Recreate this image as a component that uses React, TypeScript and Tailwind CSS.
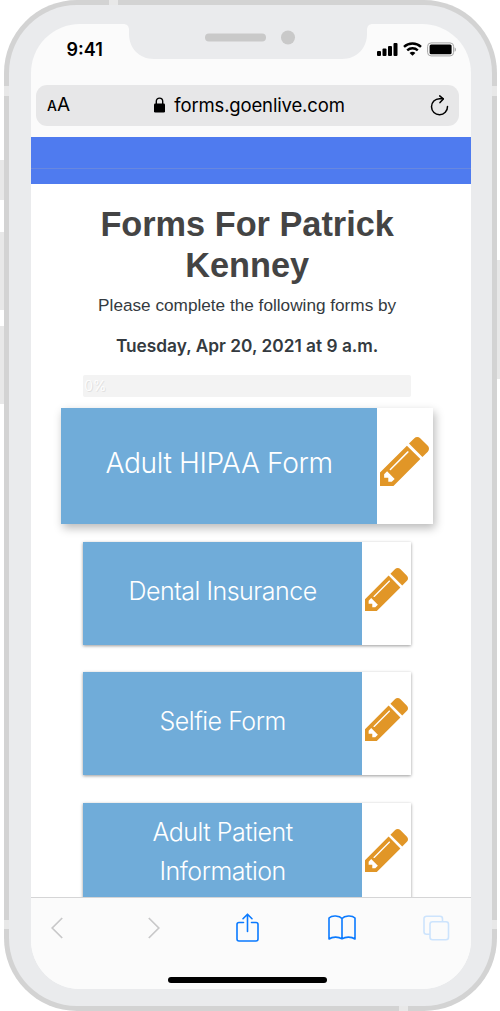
import clsx from "clsx";

const forms = [
  { title: "Adult HIPAA Form", active: true },
  { title: "Dental Insurance", active: false },
  { title: "Selfie Form", active: false },
  { title: "Adult Patient Information", active: false },
];

const PencilIcon = ({ className }: { className?: string }) => (
  <svg viewBox="0 149 1515 1515" fill="currentColor" className={className}>
    <path d="M363 1536l91-91-235-235-91 91v107h128v128h107zM886 608q0-22-22-22-10 0-17 7l-542 542q-7 7-7 17 0 22 22 22 10 0 17-7l542-542q7-7 7-17zM832 416l416 416-832 832h-416v-416zM1515 512q0 53-37 90l-166 166-416-416 166-165q36-38 90-38 53 0 91 38l235 234q37 39 37 91z" />
  </svg>
);

const FormCard = ({ title, active }: { title: string; active: boolean }) => (
  <div
    className={clsx(
      "flex shrink-0 bg-white",
      active
        ? "-mx-[22px] mb-[18px] h-[116.5px] shadow-[2px_4px_9px_rgba(0,0,0,0.28)]"
        : "mb-[27.4px] h-[103px] shadow-[0_1px_3px_rgba(0,0,0,0.4)]"
    )}
  >
    <div
      className={clsx(
        "flex flex-1 items-center justify-center bg-[#70acd9] pb-[5px] text-center font-[350] text-white",
        active
          ? "text-[28.2px] tracking-[-0.38px]"
          : "px-8 text-[25px] leading-[39px] tracking-[-0.5px]"
      )}
    >
      {title}
    </div>
    <div
      className={clsx(
        "flex items-center pb-2 pl-[3px] text-[#e19627]",
        active ? "w-14" : "w-[49px]"
      )}
    >
      <PencilIcon className={active ? "size-[49px]" : "size-[43px]"} />
    </div>
  </div>
);

const Notch = () => (
  <div className="absolute left-[92px] top-0 h-[36px] w-[250px]">
    <svg viewBox="0 0 250 36" className="h-full w-full">
      <path
        d="M0 -1v1c4 0 6 2 6 6v4c0 14 10 25 25 25h188c15 0 25-11 25-25v-4c0-4 2-6 6-6v-1z"
        fill="#eaebed"
      />
      <rect x="82" y="9.5" width="61" height="8" rx="4" fill="#c9c9c9" />
      <circle cx="165" cy="13.5" r="7" fill="#c9c9c9" />
    </svg>
  </div>
);

const StatusBar = () => (
  <div className="flex h-[61px] items-start justify-between pl-[35.5px] pr-[13.5px]">
    <span className="mt-[14.5px] text-[18px] font-semibold leading-6 text-black">
      9:41
    </span>
    <div className="mt-[18.5px] flex items-start">
      <svg width="21" height="15" viewBox="0 0 21 15">
        <rect x="0" y="9" width="4" height="5" rx="1" />
        <rect x="5.5" y="6.5" width="4" height="7.5" rx="1" />
        <rect x="11" y="4" width="4" height="10" rx="1" />
        <rect x="16.5" y="1" width="4" height="13" rx="1" />
      </svg>
      <svg
        width="19"
        height="15"
        viewBox="0 0 19 15"
        className="ml-[5px]"
        fill="none"
        stroke="#000"
        strokeWidth="2.4"
      >
        <path d="M1 4.8a12.5 12.5 0 0 1 17 0" />
        <path d="M4.2 8.4a7.8 7.8 0 0 1 10.6 0" />
        <path d="M9.5 13.7l-2.9-2.8a4 4 0 0 1 5.8 0z" fill="#000" stroke="none" />
      </svg>
      <svg width="30" height="15" viewBox="0 0 30 15" className="ml-[5px]">
        <rect
          x="0.6"
          y="0.9"
          width="26"
          height="13"
          rx="3.5"
          fill="none"
          stroke="#a5a5a5"
        />
        <rect x="2.6" y="2.6" width="22" height="9.7" rx="1.5" />
        <path d="M27.6 5.2v4.6c1.8-.8 1.8-3.8 0-4.6z" fill="#a5a5a5" />
      </svg>
    </div>
  </div>
);

const AddressBar = () => (
  <div className="mb-[11.5px] ml-[5px] mr-[11.5px] flex h-[41px] shrink-0 items-center justify-between rounded-[11px] bg-[#e7e7e8] pl-[11px] pr-[10px] text-black">
    <div className="flex w-[22px] items-baseline">
      <span className="text-[14px] font-medium leading-5">A</span>
      <span className="text-[19px] leading-5">A</span>
    </div>
    <div className="flex items-center">
      <svg width="11" height="16" viewBox="0 0 11 16" className="mr-[9px]">
        <rect x="0" y="6.5" width="11" height="9" rx="1.3" />
        <path
          d="M2.3 7V4.3a3.2 3.2 0 0 1 6.4 0V7"
          fill="none"
          stroke="#000"
          strokeWidth="1.4"
        />
      </svg>
      <span className="text-[18.5px] leading-6 tracking-[-0.15px]">
        forms.goenlive.com
      </span>
    </div>
    <svg
      width="19"
      height="21"
      viewBox="0 0 19 21"
      fill="none"
      stroke="#000"
      strokeWidth="1.5"
      strokeLinecap="round"
      strokeLinejoin="round"
    >
      <path d="M17.5 11.5a8 8 0 1 1-8-7.8h3.5" />
      <path d="M9.7 .9l3.6 3-3.3 3.7" />
    </svg>
  </div>
);

const Toolbar = () => (
  <div className="flex h-[92px] shrink-0 flex-col border-t border-[#d5d5d6] bg-[#fbfbfb]">
    <div className="flex h-[60px] items-center pl-[20px]">
      <svg width="12" height="22" viewBox="0 0 12 22" fill="none" stroke="#c8c8c9" strokeWidth="1.7">
        <path d="M11.2 1L1.2 11l10 10" />
      </svg>
      <svg width="12" height="22" viewBox="0 0 12 22" fill="none" stroke="#c8c8c9" strokeWidth="1.7" className="ml-[85px]">
        <path d="M.8 1l10 10-10 10" />
      </svg>
      <svg width="23" height="29" viewBox="0 0 23 29" fill="none" stroke="#0a7aff" strokeWidth="1.6" strokeLinecap="round" strokeLinejoin="round" className="ml-[76px]">
        <path d="M7.5 9.5H3A2 2 0 0 0 1 11.5V26a2 2 0 0 0 2 2h17a2 2 0 0 0 2-2V11.5a2 2 0 0 0-2-2h-4.5" />
        <path d="M11.5 18.5V1.5M7 5.7l4.5-4.5L16 5.7" />
      </svg>
      <svg width="28" height="25" viewBox="0 0 28 25" fill="none" stroke="#0a7aff" strokeWidth="1.6" strokeLinejoin="round" className="ml-[69px]">
        <path d="M14 3.5C11.5 .6 4 0 1 3v21c3.5-2.5 9.5-2.5 13-.2 3.5-2.3 9.5-2.3 13 .2V3C24 0 16.5 .6 14 3.5zM14 3.5v20" />
      </svg>
      <svg width="27" height="26" viewBox="0 0 27 26" fill="none" stroke="#cde4fd" strokeWidth="1.6" className="ml-[67px]">
        <path d="M7 19.2H3.5a2.5 2.5 0 0 1-2.5-2.5v-13A2.5 2.5 0 0 1 3.500 1.200h13.500a2.500 2.500 0 0 1 2.500 2.500v3" />
        <rect x="7" y="6.7" width="18.5" height="18" rx="2.5" />
      </svg>
    </div>
    <div className="ml-[136.5px] mt-[19px] h-[6px] w-[159.5px] rounded-full bg-black" />
  </div>
);

const App = () => {
  return (
    <div className="relative h-[1011px] w-[500px] overflow-hidden bg-white font-['Inter',sans-serif]">
      {/* side buttons */}
      <div className="absolute left-0 top-[160px] h-10 w-2 bg-[#e8e8e8]" />
      <div className="absolute left-0 top-[232px] h-[78px] w-2 bg-[#e8e8e8]" />
      <div className="absolute left-0 top-[326px] h-[78px] w-2 bg-[#e8e8e8]" />
      <div className="absolute right-0 top-[260px] h-[119px] w-2 bg-[#e8e8e8]" />

      <div className="relative ml-1 h-[1011px] w-[493px] overflow-hidden rounded-[73px] bg-[#d3d3d3] p-[5px]">
        {/* antenna bands */}
        <div className="absolute left-[105px] top-0 h-[6px] w-[9px] bg-[#e8e8e8]" />
        <div className="absolute left-0 top-[86px] h-[10px] w-[493px] bg-[#e8e8e8]" />
        <div className="absolute left-0 top-[920px] h-[9px] w-[493px] bg-[#e8e8e8]" />
        <div className="absolute bottom-0 left-[395px] h-[6px] w-[9px] bg-[#e8e8e8]" />

        <div className="relative h-full rounded-[68px] bg-[#eaebed] pl-[22px] pt-[18.5px]">
          <div className="relative flex h-[965px] w-[439.5px] flex-col overflow-hidden rounded-[49px] bg-[#fbfbfb]">
            <Notch />
            <StatusBar />
            <AddressBar />
            <div className="h-[31px] shrink-0 bg-[#4f7bef]" />
            <div className="h-4 shrink-0 border-t border-[#6887df] bg-[#4f7bef]" />

            <main className="flex min-h-0 flex-1 flex-col overflow-hidden bg-white pl-[52.3px] pr-[59.5px] text-[#343a40]">
              <h1 className="mt-[19.5px] text-center font-['Liberation_Sans',sans-serif] text-[34.3px] font-bold leading-[41px] text-[#444]">
                Forms For Patrick Kenney
              </h1>
              <p className="mt-[9px] whitespace-nowrap text-center font-['Liberation_Sans',sans-serif] text-[17.2px] leading-5">
                Please complete the following forms by
              </p>
              <p className="mt-[21.5px] whitespace-nowrap text-center text-[17.3px] font-semibold leading-5">
                Tuesday, Apr 20, 2021 at 9 a.m.
              </p>
              <div className="mb-[10.5px] mt-[18.5px] flex h-[22.5px] shrink-0 items-center rounded-[2px] bg-[#f3f3f3] pl-px text-[14px] font-light text-white [text-shadow:1px_1px_0_#e0e0e0]">
                0%
              </div>
              {forms.map((form) => (
                <FormCard key={form.title} {...form} />
              ))}
            </main>

            <Toolbar />
          </div>
        </div>
      </div>
    </div>
  );
};

export default App;
